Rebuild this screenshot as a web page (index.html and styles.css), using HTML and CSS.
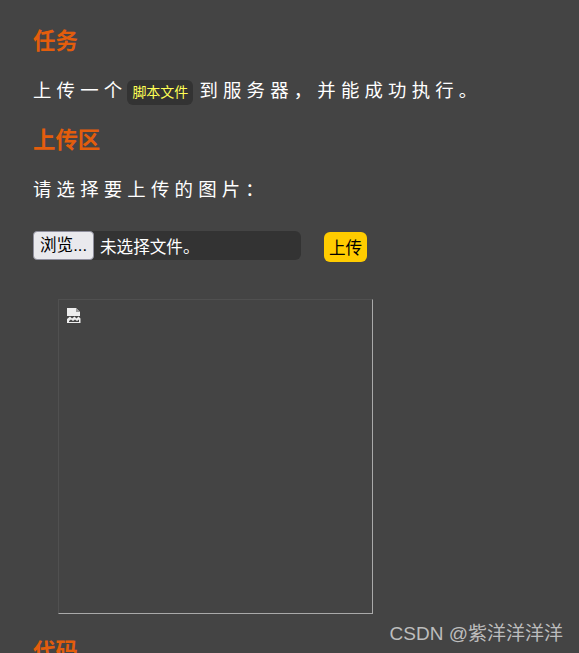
FILE: index.html
```html
<!DOCTYPE html>
<html lang="zh-CN">
<head>
    <meta charset="UTF-8">
    <title>上传</title>
    <link rel="stylesheet" href="styles.css">
</head>
<body>
    <div class="content">
        <h2>任务</h2>
        <p class="text">上传一个<code class="tag">脚本文件</code>到服务器，并能成功执行。</p>
        <h2>上传区</h2>
        <p class="text">请选择要上传的图片：</p>
        <div class="upload-row">
            <div class="file-box">
                <span class="browse">浏览...</span>
                <span class="file-name">未选择文件。</span>
            </div>
            <button class="upload-button">上传</button>
        </div>
        <div class="preview">
            <svg class="broken" width="16" height="17" viewBox="0 0 16 17">
                <path fill="#eee" d="M1 1h9l4 4v4H1z"/>
                <path fill="#999" d="M10 1v4h4z"/>
                <path fill="#eee" d="M1 12l3-2.500 2 2 2.500-2 2 2 2-2 2 2V16H1z"/>
                <path fill="#444" d="M3 14l2-1.500 2 1.500 2-1.500 2 1.500 2-1.500v2.500H3z"/>
            </svg>
        </div>
        <h2>代码</h2>
    </div>
    <div class="watermark">CSDN @紫洋洋洋洋</div>
</body>
</html>
```

FILE: styles.css
```css
html, body {
    height: 100%;
    overflow: hidden;
}
body {
    margin: 0;
    background-color: #444;
    font-family: "Liberation Sans", "Noto Sans CJK SC", sans-serif;
    color: #fff;
}
.content {
    padding: 26px 0 0 33px;
}
h2 {
    margin: 0;
    font-size: 22.4px;
    line-height: 32px;
    font-weight: bold;
    color: #e35d0c;
}
.text {
    margin: 17px 0 18px;
    font-size: 18.4px;
    line-height: 32px;
    letter-spacing: 5.2px;
}
.tag {
    display: inline-block;
    margin: 0 6px 0 0;
    padding: 0 5px;
    border-radius: 6px;
    background-color: #333;
    color: #ff5;
    font-family: "Liberation Sans", "Noto Sans CJK SC", sans-serif;
    font-size: 14px;
    line-height: 25px;
    letter-spacing: 0;
}
.upload-row {
    display: flex;
    align-items: flex-start;
    margin-top: 25px;
}
.file-box {
    display: flex;
    align-items: center;
    width: 268px;
    height: 29px;
    border-radius: 6px;
    background-color: #333;
}
.browse {
    box-sizing: border-box;
    width: 61px;
    height: 29px;
    border: 1px solid #8f8f9d;
    border-radius: 4px;
    background-color: #e9e9ed;
    color: #000;
    font-size: 16.6px;
    line-height: 27px;
    text-align: center;
}
.file-name {
    margin-left: 6px;
    font-size: 16.6px;
}
.upload-button {
    width: 43px;
    height: 30px;
    margin: 1px 0 0 23px;
    padding: 0;
    border: none;
    border-radius: 6px;
    background-color: #fc0;
    color: #000;
    font-family: inherit;
    font-size: 16.6px;
}
.preview {
    box-sizing: border-box;
    width: 315px;
    height: 315px;
    margin: 37px 0 22px 25px;
    padding: 7px;
    border: 1px solid;
    border-color: #505050 #aaa #aaa #505050;
}
.broken {
    display: block;
}
.watermark {
    position: absolute;
    right: 16px;
    top: 622px;
    font-size: 19px;
    line-height: 24px;
    color: #bdbdbd;
}
```
